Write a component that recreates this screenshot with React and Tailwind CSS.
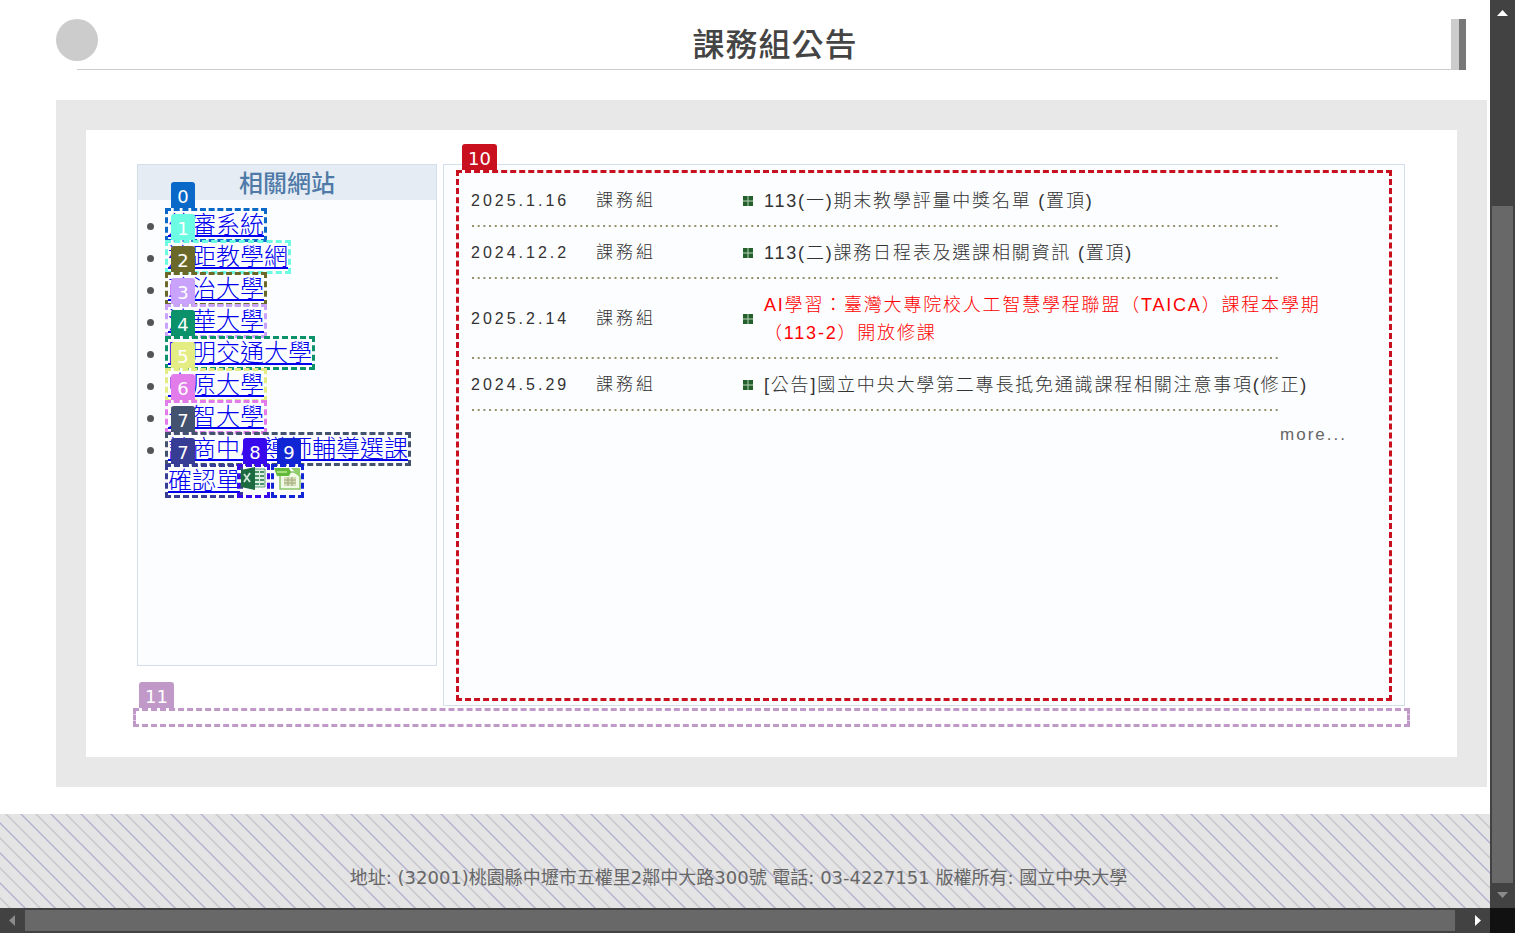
const LATIN = "font-['Liberation_Sans','Noto_Sans_CJK_TC',sans-serif]";

function Badge({ n, color }) {
  return (
    <span className={`absolute -top-[29px] left-[3px] z-10 flex h-[26px] min-w-6 items-center justify-center rounded-t-[3px] px-[6px] pt-[3px] font-['DejaVu_Sans',sans-serif] text-lg leading-none font-normal text-white ${color}`}>
      {n}
    </span>
  );
}

function Outline({ n, border, color, inset = "-inset-x-[3px] -inset-y-px" }) {
  return (
    <span className={`pointer-events-none absolute border-[3px] border-dashed ${inset} ${border}`}>
      <Badge n={n} color={color} />
    </span>
  );
}

const SITES = [
  { name: "外審系統", n: 0, border: "border-[#0a68c8]", color: "bg-[#0a68c8]" },
  { name: "遠距教學網", n: 1, border: "border-[#6cfbe3]", color: "bg-[#6cfbe3]" },
  { name: "政治大學", n: 2, border: "border-[#6b692a]", color: "bg-[#6b692a]" },
  { name: "清華大學", n: 3, border: "border-[#c9a3fb]", color: "bg-[#c9a3fb]" },
  { name: "陽明交通大學", n: 4, border: "border-[#0b926b]", color: "bg-[#0b926b]" },
  { name: "中原大學", n: 5, border: "border-[#e4ec84]", color: "bg-[#e4ec84]" },
  { name: "元智大學", n: 6, border: "border-[#e37ceb]", color: "bg-[#e37ceb]" },
];

const NEWS = [
  { date: "2025.1.16", title: "113(一)期末教學評量中獎名單 (置頂)" },
  { date: "2024.12.2", title: "113(二)課務日程表及選課相關資訊 (置頂)" },
  { date: "2025.2.14", title: "AI學習：臺灣大專院校人工智慧學程聯盟（TAICA）課程本學期（113-2）開放修課", hot: true },
  { date: "2024.5.29", title: "[公告]國立中央大學第二專長抵免通識課程相關注意事項(修正)" },
];

function Bullet() {
  return (
    <svg className="size-[10px] shrink-0" viewBox="0 0 10 10" aria-hidden="true">
      <path d="M0 0h10v10H0z" fill="#b9d3bd" />
      <path d="M0 0h4.500v4.500H0zM5.500 0H10v4.500H5.500zM0 5.500h4.500V10H0zM5.500 5.500H10V10H5.500z" fill="#24602b" />
    </svg>
  );
}

function ExcelIcon() {
  return (
    <svg className="h-6 w-[27px]" viewBox="0 0 27 24" aria-hidden="true">
      <path d="M13 2h12v18H13z" fill="#dcefe2" stroke="#5f9f78" />
      <path d="M15 4h4v2h-4zM20 4h4v2h-4zM15 8h4v2h-4zM20 8h4v2h-4zM15 12h4v2h-4zM20 12h4v2h-4zM15 16h4v2h-4zM20 16h4v2h-4z" fill="#4c956a" />
      <path d="M1 3 15 0v23L1 20z" fill="#1c6a40" />
      <path d="m4 7 6 8M10 6l-6 9" stroke="#cfe6d8" strokeWidth="1.800" />
    </svg>
  );
}

function SheetIcon() {
  return (
    <svg className="h-6 w-[27px]" viewBox="0 0 27 24" aria-hidden="true">
      <path d="M6 5h14l6 4v13H6z" fill="#f0f8e6" stroke="#8cc56c" strokeWidth="1.500" />
      <path d="M10 10h12v9H10z" fill="#d3dfb8" />
      <path d="M10 13h12M10 16h12M14 10v9M18 10v9" stroke="#a3a67c" />
      <path d="M0 1h15l2 4-2 4H3z" fill="#62b93a" />
      <path d="M3 5h10" stroke="#a3de7f" strokeWidth="2" />
      <path d="M17 1h9v9z" fill="#8fce6b" />
    </svg>
  );
}

function Sites() {
  return (
    <section className="h-[502px] w-[300px] shrink-0 border border-[#d3dfeb] bg-[#fcfdff]">
      <h2 className="h-[35px] bg-[#e5ecf4] text-center text-2xl leading-[38px] font-medium text-[#4f7aa8]">相關網站</h2>
      <ul className="list-disc pt-[9px] pl-[30px] text-2xl leading-8 font-light text-[#555]">
        {SITES.map((s) => (
          <li key={s.n} className="h-8">
            <a href="#" className="relative inline-block h-8 text-[#0000ee] underline">
              {s.name}
              <Outline n={s.n} border={s.border} color={s.color} />
            </a>
          </li>
        ))}
        <li>
          <a href="#" className="relative inline-block h-8 align-top text-[#0000ee] underline">
            諮商中心導師輔導選課
            <Outline n={7} border="border-[#43526f]" color="bg-[#43526f]" />
          </a>
          <div className="flex">
            <a href="#" className="relative block h-8 text-[#0000ee] underline">
              確認單
              <Outline n={7} border="border-[#373c94]" color="bg-[#373c94]" />
            </a>
            <a href="#" aria-label="Excel" className="relative block h-8 pt-[2px]">
              <ExcelIcon />
              <Outline n={8} border="border-[#3909ee]" color="bg-[#3909ee]" />
            </a>
            <a href="#" aria-label="ODS" className="relative ml-[7px] block h-8 pt-[2px]">
              <SheetIcon />
              <Outline n={9} border="border-[#1026d4]" color="bg-[#1026d4]" />
            </a>
          </div>
        </li>
      </ul>
    </section>
  );
}

function DottedLine() {
  return (
    <svg className="block h-1 w-[809px]" aria-hidden="true">
      <line x1="1" y1="2" x2="808" y2="2" stroke="#96916e" strokeWidth="2" strokeDasharray="2 3.700" />
    </svg>
  );
}

function News() {
  return (
    <section className={`flex min-w-0 flex-1 border border-[#d3dfeb] bg-[#fcfdff] px-3 pt-[5px] pb-1 ${LATIN}`}>
      <div className="relative flex-1 px-[15px] pt-[17px] text-[#333]">
        <Outline n={10} border="border-[#c8101f]" color="bg-[#c8101f]" inset="inset-0" />
        <ul className="font-light">
          {NEWS.map((item) => (
            <li key={item.date}>
              <div className="flex items-center pb-[9px]">
                <time className="w-[125px] text-base font-normal tracking-[3px]">{item.date}</time>
                <span className="w-[147px] text-[17px] tracking-[3px]">課務組</span>
                <Bullet />
                <a href="#" className={`ml-[11px] max-w-[568px] text-lg leading-7 tracking-widest ${item.hot ? "text-[#ff0000]" : "text-[#333]"}`}>
                  {item.title}
                </a>
              </div>
              <DottedLine />
              <div className="h-[11px]" />
            </li>
          ))}
        </ul>
        <div className="pr-[30px] text-right leading-6">
          <a href="#" className="text-[17px] leading-6 tracking-[2px] text-[#666]">more...</a>
        </div>
      </div>
    </section>
  );
}

function VerticalBar() {
  return (
    <div className="flex flex-col bg-[#424242] px-[2px]" aria-hidden="true">
      <svg className="h-[25px] w-[21px]" viewBox="0 0 21 25"><path d="M5 16h11l-5.500-6z" fill="#fff" /></svg>
      <div className="min-h-0 basis-[181px]" />
      <div className="flex-1 bg-[#686868]" />
      <svg className="h-[25px] w-[21px]" viewBox="0 0 21 25"><path d="M5 9h11l-5.500 6z" fill="#8a8a8a" /></svg>
    </div>
  );
}

function HorizontalBar() {
  return (
    <div className="flex h-[25px] bg-[#424242] py-[2px]" aria-hidden="true">
      <svg className="h-[21px] w-[25px]" viewBox="0 0 25 21"><path d="M15 5v11l-6-5.500z" fill="#8a8a8a" /></svg>
      <div className="flex-1 bg-[#686868]" />
      <svg className="h-[21px] w-[35px]" viewBox="0 0 35 21"><path d="M20 5v11l6-5.500z" fill="#fff" /></svg>
    </div>
  );
}

export default function App() {
  return (
    <div className="grid h-screen grid-cols-[minmax(0,1fr)_25px] grid-rows-[minmax(0,1fr)_25px] overflow-hidden bg-white font-['DejaVu_Sans','Noto_Sans_CJK_TC',sans-serif]">
      <div className="flex flex-col overflow-hidden">
        <header className="mr-6 ml-14 flex pt-[19px]">
          <div className="-mr-[21px] size-[42px] shrink-0 rounded-full bg-[#ccc]" />
          <h1 className="h-[51px] flex-1 border-b border-[#ccc] pl-[22px] text-center text-[32px] leading-[52px] font-medium tracking-[1px] text-[#444]">課務組公告</h1>
          <div className="w-[15px] border-r-[7px] border-[#777] bg-[#ccc]" />
        </header>
        <main className="mt-[30px] mr-[3px] ml-14 border-[30px] border-[#e8e8e8] bg-white pt-[34px] pr-[52px] pb-[30px] pl-[51px]">
          <div className="flex h-[542px] items-start gap-[6px]">
            <Sites />
            <div className="flex h-full min-w-0 flex-1"><News /></div>
          </div>
          <div className="relative -mr-[5px] -ml-1 mt-[2px] h-[19px]">
            <Outline n={11} border="border-[#c199c9]" color="bg-[#c199c9]" inset="inset-0" />
          </div>
        </main>
        <footer className="relative mt-[27px] flex-1 bg-[#e4e4e4] text-center text-lg text-[#666]">
          <svg className="absolute inset-0 size-full" aria-hidden="true">
            <defs>
              <pattern id="stripes" width="30" height="30" patternUnits="userSpaceOnUse" x="21">
                <path d="M-15-15 45 45M-15 15 15 45M15-15 45 15" stroke="#b5b4d0" strokeWidth="1.500" />
                <path d="M-15 0 30 45M0-15 45 30" stroke="#c8c7ce" strokeWidth="1.500" />
              </pattern>
            </defs>
            <rect width="100%" height="100%" fill="url(#stripes)" />
          </svg>
          <p className="relative pt-[50px] pr-[13px]">地址: (32001)桃園縣中壢市五權里2鄰中大路300號 電話: 03-4227151 版權所有: 國立中央大學</p>
        </footer>
      </div>
      <VerticalBar />
      <HorizontalBar />
      <div className="bg-[#111]" />
    </div>
  );
}
